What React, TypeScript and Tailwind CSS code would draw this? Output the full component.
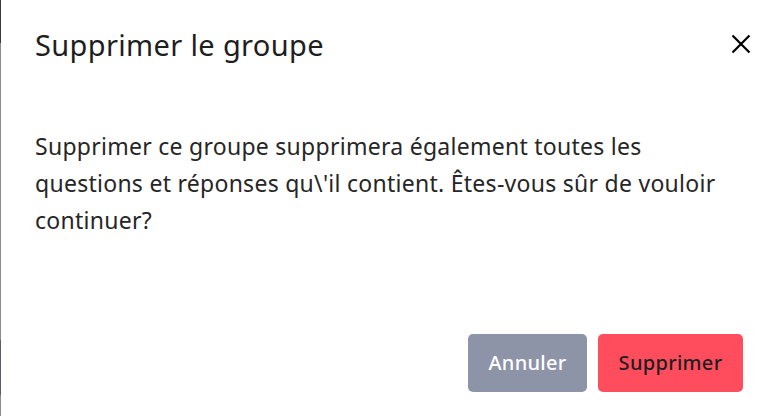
import React from "react";

export default function App() {
  return (
    <div
      className="w-[778px] h-[416px] bg-white flex overflow-hidden"
      style={{ fontFamily: '"Noto Sans", "Open Sans", sans-serif' }}
    >
      <div className="w-px h-full flex flex-col shrink-0">
        <div className="h-[43px] bg-[#3a3a3e]" />
        <div className="h-[297px] bg-[#8c8c8c]" />
        <div className="h-[55px] bg-[#5a5a68]" />
        <div className="flex-1 bg-[#8c8c8c]" />
      </div>
      <div className="flex-1 flex flex-col pl-[34px] pr-[27px]">
        <div className="flex items-center justify-between pt-[26px] h-[64px]">
          <h2 className="text-[29px] leading-[36px] tracking-[0.35px] text-[#1e1e1e] font-normal">
            Supprimer le groupe
          </h2>
          <button className="w-[20px] h-[20px] mb-[3px] flex items-center justify-center">
            <svg width="20" height="20" viewBox="0 0 20 20" fill="none">
              <path
                d="M1.5 1.5 L18.5 18.5 M18.5 1.5 L1.5 18.5"
                stroke="#000"
                strokeWidth="2.2"
              />
            </svg>
          </button>
        </div>
        <p className="mt-[64px] w-[705px] text-[23px] leading-[37px] tracking-[0.27px] text-[#262626]">
          Supprimer ce groupe supprimera également toutes les questions et
          réponses qu\'il contient. Êtes-vous sûr de vouloir continuer?
        </p>
        <div className="flex-1" />
        <div className="flex justify-end gap-[11px] pr-[8px] pb-[24px]">
          <button className="h-[58px] w-[119px] rounded-[5px] bg-[#8e94a8] text-white text-[20px] font-medium tracking-[0.3px]">
            Annuler
          </button>
          <button className="h-[58px] w-[145px] rounded-[5px] bg-[#ff4d5e] text-[#1e1e1e] text-[20px] font-medium tracking-[0.3px]">
            Supprimer
          </button>
        </div>
      </div>
    </div>
  );
}
